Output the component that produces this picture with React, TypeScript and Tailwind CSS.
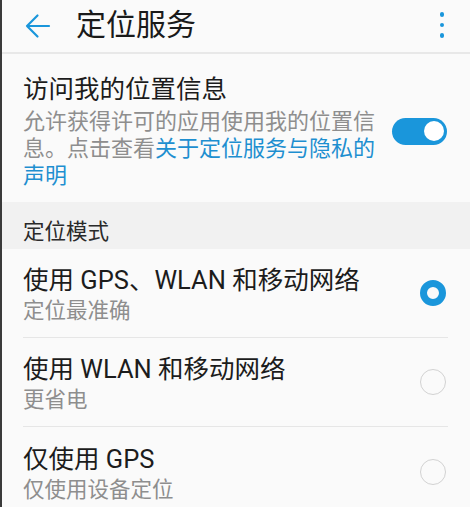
import React from 'react';

const BLUE = 'text-[#1a96db]';

function Radio({ checked }: { checked?: boolean }) {
  return checked ? (
    <span className="block w-[26px] h-[26px] rounded-full border-[7px] border-[#1a96db] bg-[#fafafa]" />
  ) : (
    <span className="block w-[26px] h-[26px] rounded-full border-[1.5px] border-[#d2d2d2] bg-[#fafafa]" />
  );
}

function ModeRow({ title, sub, checked, divider }: { title: string; sub: string; checked?: boolean; divider?: boolean }) {
  return (
    <div className="pl-[21px] pr-[22px]">
      <div className={`flex items-center h-[89px] ${divider ? 'border-b border-[#e6e6e6]' : ''}`}>
        <div className="flex-1 pt-[3px]">
          <div className="text-[25.5px] leading-[32px] text-[#1c1c1c]">{title}</div>
          <div className="text-[21.5px] leading-[28px] text-[#8e8e8e] mt-[1px]">{sub}</div>
        </div>
        <div className="mr-[2px]">
          <Radio checked={checked} />
        </div>
      </div>
    </div>
  );
}

export default function App() {
  return (
    <div
      className="w-[470px] h-[507px] overflow-hidden bg-[#fafafa] border-l-2 border-[#3a3a3a]"
      style={{ fontFamily: "Roboto, 'Noto Sans CJK SC', sans-serif" }}
    >
      <header className="h-[54px] flex items-center border-b-2 border-[#e8e8e8] pl-[23px] pr-[26px]">
        <svg width="26" height="26" viewBox="0 0 26 26" fill="none" className={BLUE}>
          <path d="M24 13H2M12.5 2.5L2 13l10.5 10.5" stroke="currentColor" strokeWidth="2.2" strokeLinecap="round" strokeLinejoin="round" />
        </svg>
        <h1 className="ml-[25px] text-[30px] leading-[40px] text-[#1a1a1a] mb-[2px]">定位服务</h1>
        <div className="ml-auto flex flex-col gap-[6px] pb-[2px]">
          <span className="block w-[4.5px] h-[4.5px] rounded-full bg-[#1a96db]" />
          <span className="block w-[4.5px] h-[4.5px] rounded-full bg-[#1a96db]" />
          <span className="block w-[4.5px] h-[4.5px] rounded-full bg-[#1a96db]" />
        </div>
      </header>

      <section className="flex items-center pl-[21px] pr-[23px] pt-[19px] pb-[13px]">
        <div className="flex-1">
          <div className="text-[25.5px] leading-[32px] text-[#1c1c1c]">访问我的位置信息</div>
          <p className="w-[356px] mt-[3px] text-[22px] leading-[27px] text-[#8e8e8e]">
            允许获得许可的应用使用我的位置信息。点击查看<span className="text-[#1e8fd0]">关于定位服务与隐私的声明</span>
          </p>
        </div>
        <div className="w-[55px] h-[27px] rounded-full bg-[#1a96db] flex items-center justify-end pr-[3px]">
          <span className="block w-[20px] h-[20px] rounded-full bg-white" />
        </div>
      </section>

      <div className="bg-[#f1f1f1] h-[47px] pl-[21px] pt-[16px]">
        <div className="text-[21.5px] leading-[28px] text-[#2a2a2a]">定位模式</div>
      </div>

      <ModeRow title="使用 GPS、WLAN 和移动网络" sub="定位最准确" checked divider />
      <ModeRow title="使用 WLAN 和移动网络" sub="更省电" divider />
      <ModeRow title="仅使用 GPS" sub="仅使用设备定位" />
    </div>
  );
}
